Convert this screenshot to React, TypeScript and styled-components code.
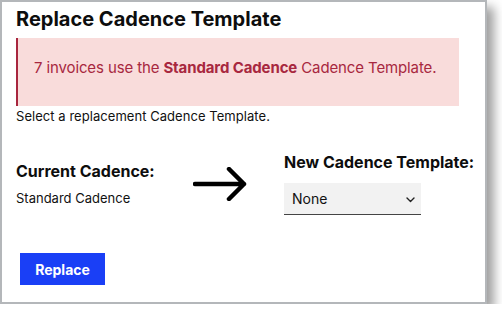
import React from "react";
import styled, { createGlobalStyle } from "styled-components";

const GlobalStyle = createGlobalStyle`
  html, body {
    margin: 0;
    padding: 0;
    background: #ffffff;
  }
  body {
    font-family: Inter, "Noto Sans", "Liberation Sans", sans-serif;
    color: #111111;
  }
`;

const Card = styled.div`
  box-sizing: border-box;
  width: 487px;
  height: 304px;
  background: #ffffff;
  border: 2px solid #b4b7ba;
  box-shadow: 7px 7px 10px rgba(0, 0, 0, 0.38);
  padding: 5px 14px 0 14px;
`;

const Title = styled.h1`
  margin: 0;
  font-size: 20px;
  line-height: 25px;
  font-weight: 700;
  color: #0d0d0d;
`;

const Alert = styled.div`
  box-sizing: border-box;
  margin-top: 6px;
  width: 443px;
  height: 68px;
  padding: 20px 0 0 16px;
  background: #f9dcdb;
  border-left: 2px solid #a8263e;
  color: #a8283f;
  font-size: 15px;
  line-height: 19px;
  letter-spacing: -0.12px;

  strong {
    font-weight: 700;
  }
`;

const Hint = styled.p`
  margin: 2px 0 0;
  font-size: 13px;
  line-height: 16px;
  letter-spacing: 0.05px;
  color: #111111;
`;

const Columns = styled.div`
  display: flex;
  align-items: center;
  margin-top: 29px;
`;

const Column = styled.div<{ $width?: number }>`
  display: flex;
  flex-direction: column;
  flex: 0 0 ${(p) => (p.$width ? `${p.$width}px` : "auto")};
`;

const Label = styled.div`
  font-size: 16px;
  line-height: 19px;
  font-weight: 700;
  color: #0d0d0d;
`;

const Value = styled.div`
  margin-top: 9px;
  font-size: 13px;
  line-height: 16px;
  color: #111111;
`;

const ArrowBox = styled.div`
  flex: 0 0 91px;
  display: flex;
  align-items: center;
`;

const SelectWrap = styled.div`
  position: relative;
  margin-top: 11px;
  width: 137px;
  height: 32px;
`;

const Select = styled.select`
  appearance: none;
  box-sizing: border-box;
  width: 100%;
  height: 100%;
  margin: 0;
  padding: 0 0 0 8px;
  border: none;
  border-bottom: 1px solid #444444;
  border-radius: 0;
  background: #f2f2f2;
  font-family: Inter, "Noto Sans", "Liberation Sans", sans-serif;
  font-size: 14px;
  color: #111111;
  outline: none;
`;

const Chevron = styled.svg`
  position: absolute;
  right: 6px;
  top: 14px;
  pointer-events: none;
`;

const Footer = styled.div`
  margin-top: 38px;
  padding-left: 4px;
`;

const Button = styled.button`
  box-sizing: border-box;
  width: 85px;
  height: 32px;
  border: none;
  border-radius: 0;
  background: #1a3ff6;
  color: #ffffff;
  font-family: Inter, "Noto Sans", "Liberation Sans", sans-serif;
  font-size: 14px;
  font-weight: 700;
  cursor: pointer;
`;

export default function App() {
  return (
    <>
      <GlobalStyle />
      <Card>
        <Title>Replace Cadence Template</Title>
        <Alert>
          7 invoices use the <strong>Standard Cadence</strong> Cadence Template.
        </Alert>
        <Hint>Select a replacement Cadence Template.</Hint>

        <Columns>
          <Column $width={177}>
            <Label>Current Cadence:</Label>
            <Value>Standard Cadence</Value>
          </Column>
          <ArrowBox>
            <svg width="54" height="34" viewBox="0 0 54 34" fill="none">
              <path
                d="M2 17 H51 M36 2 L51 17 L36 32"
                stroke="#000000"
                strokeWidth="4.5"
                strokeLinecap="round"
                strokeLinejoin="round"
              />
            </svg>
          </ArrowBox>
          <Column>
            <Label>New Cadence Template:</Label>
            <SelectWrap>
              <Select defaultValue="none">
                <option value="none">None</option>
                <option value="standard">Standard Cadence</option>
              </Select>
              <Chevron width="9" height="6" viewBox="0 0 9 6" fill="none">
                <path
                  d="M1 1 L4.5 4.5 L8 1"
                  stroke="#222222"
                  strokeWidth="1.4"
                  strokeLinecap="round"
                  strokeLinejoin="round"
                />
              </Chevron>
            </SelectWrap>
          </Column>
        </Columns>

        <Footer>
          <Button>Replace</Button>
        </Footer>
      </Card>
    </>
  );
}
